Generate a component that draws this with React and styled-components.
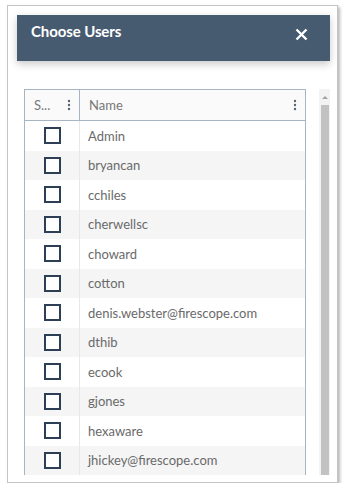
import styled, { createGlobalStyle } from "styled-components";

const Global = createGlobalStyle`
    body {
        margin: 0;
        background: #fff;
        font-family: Lato, "Open Sans", sans-serif;
    }
`;

const Frame = styled.div`
    margin: 5px 0 0 7px;
    width: 331px;
    height: 478px;
    box-sizing: border-box;
    border: 1px solid #c4c4c4;
    box-shadow: 2px 2px 3px rgba(0, 0, 0, .28);
    padding: 9px 7px 7px 9px;
    display: flex;
    flex-direction: column;
    background: #fff;
`;

const Header = styled.div`
    height: 46px;
    flex: none;
    background: #475b70;
    display: flex;
    align-items: flex-start;
    justify-content: space-between;
    padding: 6px 22px 0 14px;
    box-sizing: border-box;
    box-shadow: 0 3px 8px rgba(0, 0, 0, .22);
    position: relative;
    z-index: 1;
`;

const Title = styled.h1`
    margin: 0;
    color: #fff;
    font-size: 15px;
    line-height: 20px;
    font-weight: bold;
    letter-spacing: -.1px;
`;

const Close = styled.button`
    border: 0;
    padding: 0;
    margin-top: 7px;
    background: none;
    width: 13px;
    height: 13px;
    display: flex;
`;

const Body = styled.div`
    flex: 1;
    min-height: 0;
    display: flex;
    padding: 28px 0 0 7px;
    overflow: hidden;
`;

const Grid = styled.div`
    width: 282px;
    flex: none;
    box-sizing: border-box;
    border: 1px solid #a7b4c2;
    border-bottom: 0;
    align-self: flex-start;
    color: #6a6a6a;
    font-size: 13px;
`;

const HeadRow = styled.div`
    display: grid;
    grid-template-columns: 54px 1fr;
    height: 30px;
    background: #fafafa;
    border-bottom: 1px solid #a7b4c2;
    color: #777;
`;

const HeadCell = styled.div`
    display: flex;
    align-items: center;
    justify-content: space-between;
    padding: 0 8px 0 9px;
    border-left: ${p => p.$first ? "0" : "1px solid #a7b4c2"};
`;

const Row = styled.div`
    display: grid;
    grid-template-columns: 54px 1fr;
    height: 29.5px;
    background: ${p => p.$alt ? "#f5f5f5" : "#fff"};
`;

const CheckCell = styled.div`
    display: flex;
    align-items: center;
    justify-content: center;
`;

const NameCell = styled.div`
    display: flex;
    align-items: center;
    padding-left: 8px;
    border-left: 1px solid #e8e8e8;
    white-space: nowrap;
`;

const Box = styled.span`
    width: 17px;
    height: 17px;
    box-sizing: border-box;
    border: 2px solid #2d3f54;
    background: #fff;
`;

const Scroll = styled.div`
    margin-left: auto;
    width: 11px;
    background: #f3f3f3;
    display: flex;
    flex-direction: column;
    align-items: center;
`;

const Arrow = styled.span`
    margin-top: 7px;
    width: 0;
    height: 0;
    border-left: 3px solid transparent;
    border-right: 3px solid transparent;
    border-bottom: 3px solid #a3a3a3;
`;

const Thumb = styled.div`
    margin-top: 6px;
    width: 8px;
    flex: 1;
    background: #c2c2c2;
`;

function Kebab() {
    return (
        <svg width="4" height="12" viewBox="0 0 4 12">
            <circle cx="2" cy="2" r="1.2" fill="#5a6470" />
            <circle cx="2" cy="6" r="1.2" fill="#5a6470" />
            <circle cx="2" cy="10" r="1.2" fill="#5a6470" />
        </svg>
    );
}

const users = [
    "Admin", "bryancan", "cchiles", "cherwellsc", "choward", "cotton",
    "denis.webster@firescope.com", "dthib", "ecook", "gjones", "hexaware",
    "jhickey@firescope.com",
];

export default function App() {
    return (
        <>
            <Global />
            <Frame>
                <Header>
                    <Title>Choose Users</Title>
                    <Close>
                        <svg width="13" height="13" viewBox="0 0 13 13">
                            <path d="M1.5 1.5 L11.5 11.5 M11.5 1.5 L1.5 11.5" stroke="#fff" strokeWidth="2.4" />
                        </svg>
                    </Close>
                </Header>
                <Body>
                    <Grid>
                        <HeadRow>
                            <HeadCell $first>S... <Kebab /></HeadCell>
                            <HeadCell>Name <Kebab /></HeadCell>
                        </HeadRow>
                        {users.map((u, i) => (
                            <Row key={u} $alt={i % 2 === 1}>
                                <CheckCell><Box /></CheckCell>
                                <NameCell>{u}</NameCell>
                            </Row>
                        ))}
                    </Grid>
                    <Scroll>
                        <Arrow />
                        <Thumb />
                    </Scroll>
                </Body>
            </Frame>
        </>
    );
}
